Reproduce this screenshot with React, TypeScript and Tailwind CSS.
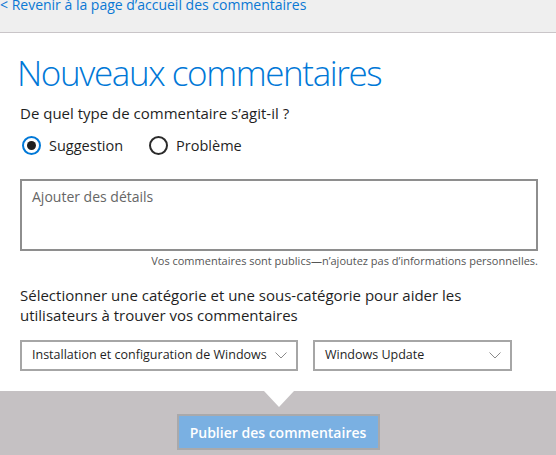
import React, { useState } from 'react';

const font = { fontFamily: '"Open Sans", "Noto Sans", sans-serif' };

function Radio({ checked, label, onClick }: { checked: boolean; label: string; onClick: () => void }) {
  return (
    <button onClick={onClick} className="flex items-center gap-[8px] text-[14.5px] text-[#1f1f1f]">
      <span
        className={`flex h-[19px] w-[19px] items-center justify-center rounded-full border-2 ${
          checked ? 'border-[#0078d7]' : 'border-[#2b2b2b]'
        }`}
      >
        {checked && <span className="h-[9px] w-[9px] rounded-full bg-[#1f1f1f]" />}
      </span>
      {label}
    </button>
  );
}

function Select({ value, className }: { value: string; className: string }) {
  return (
    <div
      className={`flex h-[31px] items-center justify-between whitespace-nowrap border-2 border-[#a6a6a6] bg-white pl-[10px] pr-[9px] text-[12.5px] text-[#1f1f1f] ${className}`}
    >
      <span>{value}</span>
      <svg width="12" height="7" viewBox="0 0 12 7" fill="none">
        <path d="M0.5 0.5l5.5 5.5 5.5-5.5" stroke="#8a8a8a" strokeWidth="1" />
      </svg>
    </div>
  );
}

export default function App() {
  const [kind, setKind] = useState<'suggestion' | 'probleme'>('suggestion');

  return (
    <div className="flex h-[455px] w-[556px] flex-col overflow-hidden bg-white" style={font}>
      {/* top bar */}
      <div className="h-[33px] shrink-0 border-b border-[#c9c5c8] bg-[#efefef]">
        <a className="-mt-[4px] block text-[14px] leading-[18px] text-[#0a78d4]">
          &lt; Revenir à la page d’accueil des commentaires
        </a>
      </div>

      <div className="flex-1 pl-[20px] pr-[18px]">
        <h1 className="mt-[18px] -ml-[3px] text-[35px] font-light leading-[44px] tracking-[-1.4px] text-[#0078d7]">
          Nouveaux commentaires
        </h1>

        <p className="mt-[8px] text-[15px] leading-[20px] text-[#1f1f1f]">De quel type de commentaire s’agit-il ?</p>

        <div className="mt-[12px] flex items-center gap-[26px] pl-[2px]">
          <Radio checked={kind === 'suggestion'} label="Suggestion" onClick={() => setKind('suggestion')} />
          <Radio checked={kind === 'probleme'} label="Problème" onClick={() => setKind('probleme')} />
        </div>

        <textarea
          placeholder="Ajouter des détails"
          className="mt-[22px] block h-[72px] w-[518px] resize-none border-2 border-[#8e8e8e] px-[10px] py-[5px] text-[14px] text-[#1f1f1f] outline-none placeholder:text-[#666]"
        />
        <p className="mt-[3px] w-[518px] text-right text-[11px] leading-[14px] text-[#555]">
          Vos commentaires sont publics—n’ajoutez pas d’informations personnelles.
        </p>

        <p className="mt-[17px] w-[500px] text-[15px] leading-[20px] text-[#1f1f1f]">
          Sélectionner une catégorie et une sous-catégorie pour aider les utilisateurs à trouver vos commentaires
        </p>

        <div className="mt-[15px] flex gap-[15px]">
          <Select value="Installation et configuration de Windows" className="w-[278px]" />
          <Select value="Windows Update" className="w-[199px]" />
        </div>
      </div>

      {/* footer */}
      <div className="relative flex h-[64px] shrink-0 justify-center bg-[#c5c1c3] pt-[23px]">
        <div className="absolute left-[264px] top-0 h-0 w-0 border-x-[15px] border-t-[16px] border-x-transparent border-t-white" />
        <button className="h-[36px] w-[203px] border-2 border-[#a9a9ab] bg-[#7ab0e2] text-[14px] font-semibold text-white">
          Publier des commentaires
        </button>
      </div>
    </div>
  );
}
